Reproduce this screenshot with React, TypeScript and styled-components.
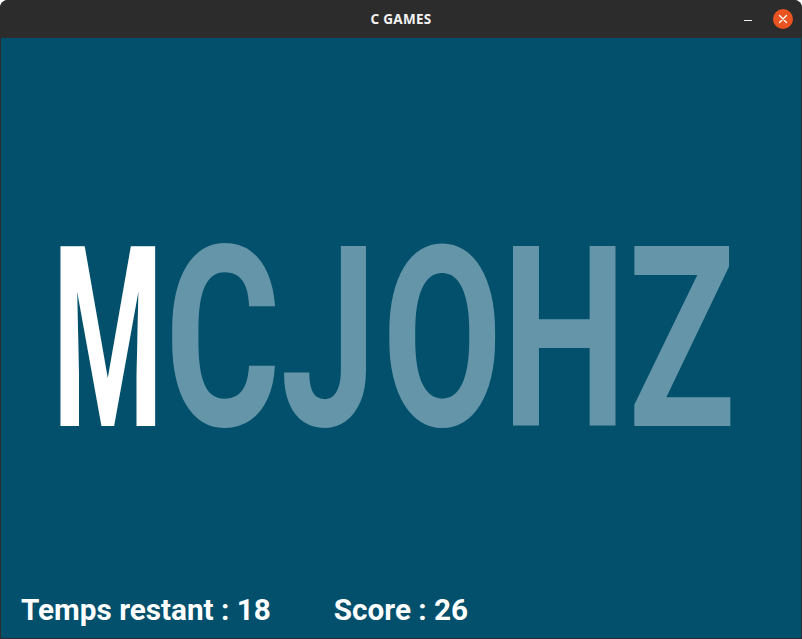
import React from "react";
import styled, { createGlobalStyle } from "styled-components";

const Global = createGlobalStyle`
  html, body { margin: 0; padding: 0; background: #ffffff; }
  body { width: 802px; height: 639px; overflow: hidden; }
  #root { width: 802px; height: 639px; }
`;

const Window = styled.div`
  width: 802px;
  height: 639px;
  display: flex;
  flex-direction: column;
  background: #2c2c2c;
  border-radius: 8px 8px 0 0;
  overflow: hidden;
  box-sizing: border-box;
`;

const TitleBar = styled.div`
  height: 38px;
  flex: 0 0 38px;
  display: flex;
  align-items: center;
  justify-content: center;
  position: relative;
  background: #2c2c2c;
`;

const Title = styled.span`
  font-family: "Noto Sans", "Open Sans", sans-serif;
  font-weight: 700;
  font-size: 13.5px;
  color: #f2f2f2;
  letter-spacing: 0.3px;
`;

const Controls = styled.div`
  position: absolute;
  right: 9px;
  top: 9px;
  display: flex;
  align-items: center;
  gap: 21px;
`;

const MinButton = styled.div`
  width: 8px;
  height: 1.5px;
  background: #f2f2f2;
  margin-top: 3px;
`;

const CloseButton = styled.div`
  width: 20px;
  height: 20px;
  border-radius: 50%;
  background: #e95420;
  display: flex;
  align-items: center;
  justify-content: center;
`;

const Body = styled.div`
  flex: 1;
  margin: 0 1px 1px 1px;
  background: #02506c;
  display: flex;
  flex-direction: column;
`;

const Stage = styled.div`
  flex: 1;
  display: flex;
  align-items: center;
  padding-left: 49px;
  padding-top: 62px;
`;

const Cell = styled.div<{ $w: number }>`
  width: ${(p) => p.$w}px;
  flex: 0 0 ${(p) => p.$w}px;
  display: flex;
  justify-content: center;
  overflow: visible;
`;

const Glyph = styled.span<{ $sx: number; $active: boolean }>`
  display: inline-block;
  font-family: Roboto, sans-serif;
  font-weight: 700;
  font-size: 253px;
  line-height: 1;
  color: ${(p) => (p.$active ? "#ffffff" : "#6595a8")};
  transform: scaleX(${(p) => p.$sx});
  white-space: nowrap;
`;

const Footer = styled.div`
  height: 60px;
  display: flex;
  align-items: center;
  padding-left: 20px;
  gap: 63px;
  padding-top: 2px;
  box-sizing: border-box;
`;

const Stat = styled.span`
  font-family: Roboto, sans-serif;
  font-weight: 700;
  font-size: 29.7px;
  color: #ffffff;
`;

const letters = [
  { ch: "M", w: 116, sx: 0.5 },
  { ch: "C", w: 114, sx: 0.7 },
  { ch: "J", w: 98, sx: 0.68 },
  { ch: "O", w: 128, sx: 0.69 },
  { ch: "H", w: 117, sx: 0.7 },
  { ch: "Z", w: 118, sx: 0.7 },
];

export default function App() {
  return (
    <>
      <Global />
      <Window>
        <TitleBar>
          <Title>C GAMES</Title>
          <Controls>
            <MinButton />
            <CloseButton>
              <svg width="10" height="10" viewBox="0 0 10 10">
                <path d="M1.5 1.5 L8.5 8.5 M8.5 1.5 L1.5 8.5" stroke="#ffffff" strokeWidth="1.4" strokeLinecap="round" />
              </svg>
            </CloseButton>
          </Controls>
        </TitleBar>
        <Body>
          <Stage>
            {letters.map((l, i) => (
              <Cell key={i} $w={l.w}>
                <Glyph $sx={l.sx} $active={i === 0}>{l.ch}</Glyph>
              </Cell>
            ))}
          </Stage>
          <Footer>
            <Stat>Temps restant : 18</Stat>
            <Stat>Score : 26</Stat>
          </Footer>
        </Body>
      </Window>
    </>
  );
}
